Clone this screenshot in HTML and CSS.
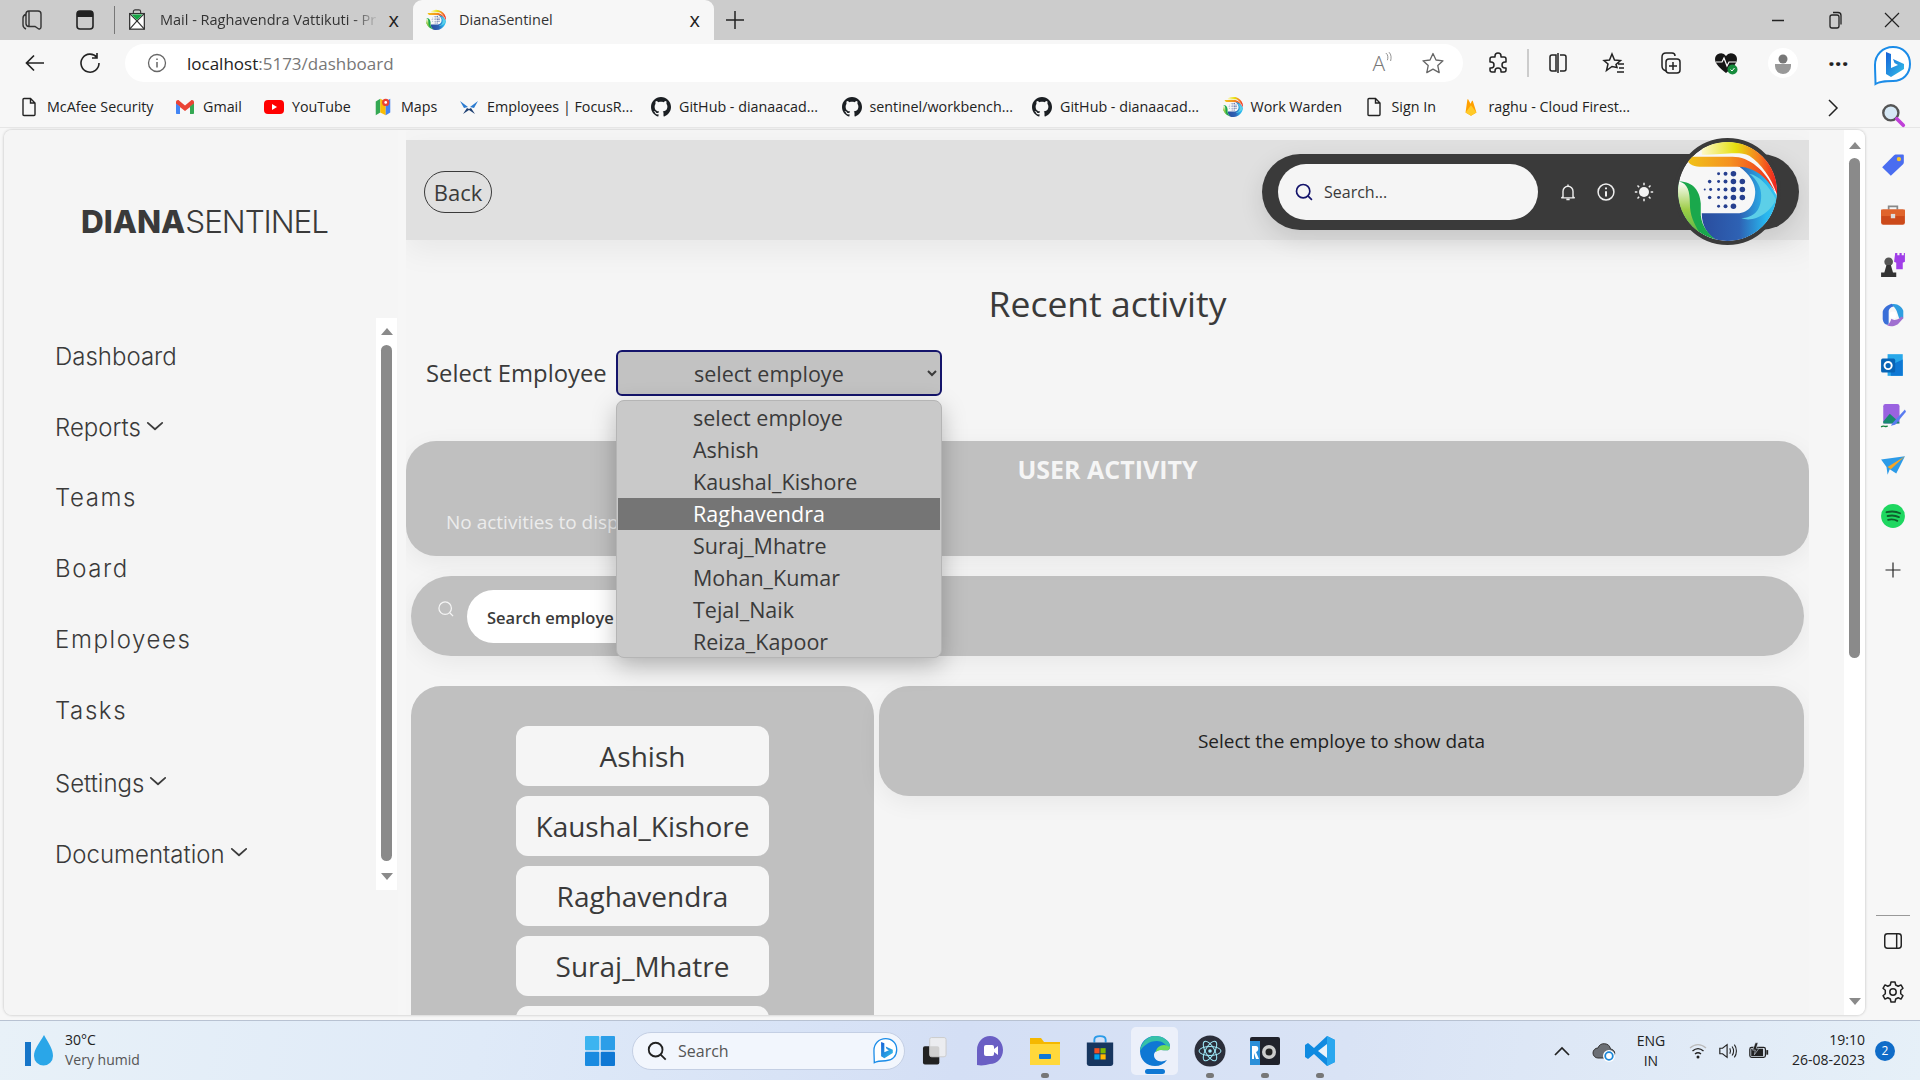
FILE: index.html
```html
<!DOCTYPE html>
<html lang="en">
<head>
    <meta charset="UTF-8">
    <title>DianaSentinel</title>
    <link rel="stylesheet" href="styles.css">
</head>
<body>
    <svg class="defs" width="0" height="0">
        <defs>
            <linearGradient id="bandTop" x1="0" x2="1" y1="0" y2="0">
                <stop offset="0" stop-color="#fdf8c8"/>
                <stop offset=".45" stop-color="#e6e010"/>
                <stop offset=".75" stop-color="#f58020"/>
                <stop offset="1" stop-color="#ee1c1c"/>
            </linearGradient>
            <linearGradient id="bandMid" x1="0" x2="1" y1="0" y2="0">
                <stop offset="0" stop-color="#f0c418"/>
                <stop offset=".5" stop-color="#f59020"/>
                <stop offset="1" stop-color="#ee2a1e"/>
            </linearGradient>
            <linearGradient id="bandBlue" x1="0" x2="1" y1="0" y2="0">
                <stop offset="0" stop-color="#2a4d9e"/>
                <stop offset=".5" stop-color="#2e62b4"/>
                <stop offset=".85" stop-color="#28b6ee"/>
                <stop offset="1" stop-color="#35c4ef"/>
            </linearGradient>
            <linearGradient id="leafPale" x1="0" x2="0" y1="0" y2="1">
                <stop offset="0" stop-color="#ffffff"/>
                <stop offset=".55" stop-color="#9ccc45"/>
                <stop offset="1" stop-color="#5cb848"/>
            </linearGradient>
            <linearGradient id="bingB" x1="0" x2="1" y1="0" y2="1">
                <stop offset="0" stop-color="#1560d8"/>
                <stop offset="1" stop-color="#34c3e8"/>
            </linearGradient>
        </defs>
        <symbol id="logo" viewBox="0 0 100 100">
            <circle cx="50" cy="50" r="50" fill="#f7f7f7"/>
            <path d="M24 6.5A50 50 0 0 1 100 53C94 36 84 22 72 14C62 9 46 13 24 13Z" fill="url(#bandTop)"/>
            <path d="M8 15H55C72 15 88 28 98 50C88 36 76 26 60 25H22C14 25 10 22 8 15Z" fill="url(#bandMid)"/>
            <path d="M24 72H60C72 72 78 62 78 50C78 42 72 32 62 25C80 26 92 38 100 55A50 50 0 0 1 38 98.500C30 94 24 85 24 72Z" fill="url(#bandBlue)"/>
            <path d="M72 32C80 38 84 46 84 54C84 70 76 76 64 77C78 82 94 70 99 58C92 44 82 34 72 32Z" fill="#5ccfe8"/>
            <path d="M1 40C16 40 22 50 23 62V74C24 86 32 94 38 98.500A50 50 0 0 1 1 40Z" fill="#1aa84c"/>
            <path d="M1 40C10 42 12 50 12 62C12 74 16 82 22 92A50 50 0 0 1 1 40Z" fill="url(#leafPale)"/>
            <g fill="#27408f">
                <circle cx="41" cy="32" r="1.500"/><circle cx="48" cy="32" r="2"/><circle cx="56" cy="32" r="2.800"/>
                <circle cx="32" cy="40" r="1.800"/><circle cx="41" cy="40" r="1.500"/><circle cx="48" cy="40" r="2"/><circle cx="56" cy="40" r="2.800"/><circle cx="65" cy="40" r="2.800"/>
                <circle cx="27" cy="48" r="1"/><circle cx="33" cy="48" r="1.500"/><circle cx="41" cy="48" r="1.500"/><circle cx="48" cy="48" r="2"/><circle cx="56" cy="48" r="2.800"/><circle cx="65" cy="48" r="2.800"/>
                <circle cx="32" cy="56" r="1.800"/><circle cx="41" cy="56" r="1.500"/><circle cx="48" cy="56" r="2"/><circle cx="56" cy="56" r="2.800"/><circle cx="65" cy="56" r="2.800"/>
                <circle cx="41" cy="65" r="1.500"/><circle cx="48" cy="65" r="2"/><circle cx="56" cy="65" r="2.800"/>
            </g>
        </symbol>
        <symbol id="github" viewBox="0 0 16 16">
            <path fill="#1b1f23" d="M8 0C3.600 0 0 3.600 0 8c0 3.500 2.300 6.500 5.500 7.600.4.1.5-.2.5-.4v-1.400c-2.200.5-2.700-1-2.700-1-.4-.9-.9-1.200-.9-1.200-.7-.5.1-.5.1-.5.8.1 1.200.8 1.200.8.7 1.200 1.900.9 2.300.7.1-.5.3-.9.5-1.100-1.800-.2-3.600-.9-3.600-4 0-.9.3-1.600.8-2.100-.1-.2-.4-1 .1-2.100 0 0 .7-.2 2.200.8.6-.2 1.300-.3 2-.3s1.400.1 2 .3c1.500-1 2.200-.8 2.200-.8.4 1.100.2 1.900.1 2.100.5.6.8 1.300.8 2.100 0 3.100-1.900 3.700-3.700 3.900.3.3.6.8.6 1.500v2.200c0 .2.1.5.6.4C13.700 14.500 16 11.500 16 8c0-4.400-3.600-8-8-8z"/>
        </symbol>
        <symbol id="doc" viewBox="0 0 16 20">
            <path fill="none" stroke="#222" stroke-width="1.400" d="M3 1.500h6.500L14 6v11.500c0 .6-.4 1-1 1H3c-.6 0-1-.4-1-1v-15c0-.6.4-1 1-1zM9.500 1.500V6H14"/>
        </symbol>
        <symbol id="chev" viewBox="0 0 20 12">
            <path fill="none" stroke="#3c3c3c" stroke-width="2" stroke-linecap="round" stroke-linejoin="round" d="M2 2l8 7 8-7"/>
        </symbol>
        <symbol id="bing" viewBox="0 0 40 44">
            <path fill="#fff" stroke="#1b8ce8" stroke-width="2" d="M21 3C10.500 3 3 11 3 21c0 7 .5 13 .5 19 5-3 10-3 17.500-3 10 0 17-7 17-17S31 3 21 3z"/>
            <path fill="url(#bingB)" d="M14 8l5 2v14l7-3-3.500-2-1.500-4 11 5v5l-13 8-5-3z"/>
        </symbol>
    </svg>

    <div class="tabbar">
        <svg class="ico ws" viewBox="0 0 24 24"><path fill="none" stroke="#333" stroke-width="1.400" d="M9 3h9c1.500 0 3 1 3 3v13c0 2-2 2.500-3 1.500l-3-2H9c-2 0-3-1-3-3V6c0-2 1-3 3-3zM6 6C4 7 3 8 3 10v7c0 2 1 3 3 4M9 3v16"/></svg>
        <svg class="ico vt" viewBox="0 0 24 24"><rect x="4" y="3" width="16" height="18" rx="3" fill="none" stroke="#222" stroke-width="1.600"/><path d="M4 5a2 2 0 0 1 2-2h12a2 2 0 0 1 2 2v4H4z" fill="#222"/></svg>
        <span class="tab-sep"></span>
        <div class="tab mail">
            <svg class="ico-s" viewBox="0 0 20 24"><rect x="2" y="5" width="16" height="17" fill="#fff" stroke="#333" stroke-width="1.400"/><path d="M2 5l8 8 8-8M2 22l8-9 8 9" fill="none" stroke="#333" stroke-width="1.300"/><path d="M4 6h12l-6 6z" fill="#15a544"/><path d="M6 5V3c0-1 1-2 2-2h4c1 0 2 1 2 2v2" fill="none" stroke="#333" stroke-width="1.200"/></svg>
            <span class="tab-title fade">Mail - Raghavendra Vattikuti - Pr</span>
            <span class="tab-x">x</span>
        </div>
        <div class="tab active">
            <svg class="ico-s"><use href="#logo"/></svg>
            <span class="tab-title">DianaSentinel</span>
            <span class="tab-x">x</span>
        </div>
        <svg class="ico plus" viewBox="0 0 24 24"><path d="M12 3v18M3 12h18" stroke="#222" stroke-width="1.500"/></svg>
        <div class="winctl">
            <svg viewBox="0 0 20 20"><path d="M4 10.500h12" stroke="#222" stroke-width="1.500"/></svg>
            <svg viewBox="0 0 20 20"><rect x="5" y="5" width="9" height="13" rx="2" fill="none" stroke="#222" stroke-width="1.300"/><path d="M8 2.500h5c2 0 3 1 3 3v9" fill="none" stroke="#222" stroke-width="1.300"/></svg>
            <svg viewBox="0 0 20 20"><path d="M3 3l14 14M17 3L3 17" stroke="#222" stroke-width="1.200"/></svg>
        </div>
    </div>

    <div class="toolbar">
        <svg class="tool back" viewBox="0 0 24 24"><path d="M21 12H4M11 4.500L3.500 12l7.500 7.500" fill="none" stroke="#222" stroke-width="1.700"/></svg>
        <svg class="tool reload" viewBox="0 0 24 24"><path d="M19 6.500A9 9 0 1 0 21 12M19 2v5h-5" fill="none" stroke="#222" stroke-width="1.600"/></svg>
        <div class="address">
            <svg class="addr-info" viewBox="0 0 20 20"><circle cx="10" cy="10" r="8.500" fill="none" stroke="#666" stroke-width="1.300"/><path d="M10 9v5.500M10 5.500v1.500" stroke="#666" stroke-width="1.500"/></svg>
            <span class="url">localhost<span class="url-dim">:5173/dashboard</span></span>
            <span class="addr-right">
                <span class="read-aloud">A<svg viewBox="0 0 10 14" width="8" height="12"><path d="M1 2c3 2 3 6 2 9M5 1c3 3 3 7 2 11" fill="none" stroke="#777" stroke-width="1"/></svg></span>
                <svg class="star" viewBox="0 0 24 24"><path d="M12 2.500l3 6.500 7 .8-5.200 4.800 1.400 7-6.200-3.500-6.200 3.500 1.400-7L2 9.800 9 9z" fill="none" stroke="#666" stroke-width="1.300" stroke-linejoin="round"/></svg>
            </span>
        </div>
        <div class="tool-group">
            <svg class="tool t-ext" viewBox="0 0 24 24"><path d="M9 5a3 3 0 0 1 6 0v1h3c1 0 2 1 2 2v3h-1a3 3 0 0 0 0 6h1v2c0 1-1 2-2 2h-3v-1a3 3 0 0 0-6 0v1H6c-1 0-2-1-2-2v-2h1a3 3 0 0 0 0-6H4V8c0-1 1-2 2-2h3z" fill="none" stroke="#222" stroke-width="1.500" stroke-linejoin="round"/></svg>
            <span class="tool-sep"></span>
            <svg class="tool t-split" viewBox="0 0 24 24"><path d="M10 4H6C4.500 4 4 5 4 6v12c0 1 .5 2 2 2h4zM14 4h4c1.500 0 2 1 2 2v12c0 1-.5 2-2 2h-4M12 2v20" fill="none" stroke="#222" stroke-width="1.500"/></svg>
            <svg class="tool t-fav" viewBox="0 0 24 24"><path d="M10 3l2.500 6 6 .5-4.500 4 1 3-5-1-5.500 4 1.500-6.500L2 9.500l5.500-.5zM16 13h6M17 17h5M15 21h7" fill="none" stroke="#222" stroke-width="1.500"/></svg>
            <svg class="tool t-coll" viewBox="0 0 24 24"><rect x="8" y="8" width="14" height="14" rx="3" fill="none" stroke="#222" stroke-width="1.500"/><path d="M15 11v8M11 15h8M8 20c-3-1-4-3-4-5V6c0-2 1-4 4-4h6c2 0 3 1 3 3" fill="none" stroke="#222" stroke-width="1.500"/></svg>
            <svg class="tool t-heart" viewBox="0 0 24 24"><path d="M12 22C6 17 1 13 1 8a6 6 0 0 1 11-3 6 6 0 0 1 11 3c0 5-5 9-11 14z" fill="#161616"/><path d="M2 11h6l2-4 3 8 2-4h7" fill="none" stroke="#fff" stroke-width="1.200"/><circle cx="18.500" cy="18.500" r="5" fill="#178c3d"/><path d="M16.500 18.500l1.500 1.500 2.500-3" fill="none" stroke="#fff" stroke-width="1"/></svg>
            <span class="avatar"><svg viewBox="0 0 24 24"><circle cx="12" cy="8" r="4.500" fill="#777"/><path d="M4 13h16v2a8 8 0 0 1-16 0z" fill="#999"/></svg></span>
            <span class="dots">···</span>
        </div>
        <svg class="bing-big"><use href="#bing"/></svg>
    </div>

    <div class="bookmarks">
        <a class="bm bm-mcafee"><svg class="bm-ico"><use href="#doc"/></svg>McAfee Security</a>
        <a class="bm bm-gmail"><svg class="bm-ico" viewBox="0 0 20 16"><path d="M1 3c0-1.500 2-2.500 3-1.500l6 5 6-5c1-1 3 0 3 1.500v2l-9 7-9-7z" fill="#ea4335"/><path d="M1 4.500V14c0 .6.4 1 1 1h3V7.500z" fill="#4285f4"/><path d="M19 4.500V14c0 .6-.4 1-1 1h-3V7.500z" fill="#34a853"/></svg>Gmail</a>
        <a class="bm bm-yt"><svg class="bm-ico" viewBox="0 0 20 16"><rect x="0" y="1" width="20" height="14" rx="4" fill="#f00"/><path d="M8 5l5 3-5 3z" fill="#fff"/></svg>YouTube</a>
        <a class="bm bm-maps"><svg class="bm-ico" viewBox="0 0 20 22"><path d="M2 5l5-3v15l-5 3z" fill="#34a853"/><path d="M7 2l6 3v15l-6-3z" fill="#fbbc04"/><path d="M13 5l5-3v15l-5 3z" fill="#4285f4"/><circle cx="13" cy="6" r="4" fill="#ea4335"/><circle cx="13" cy="6" r="1.500" fill="#fff"/></svg>Maps</a>
        <a class="bm bm-emp"><svg class="bm-ico" viewBox="0 0 20 16"><path d="M1 2l8 6-4 1zM19 2l-8 6 4 1z" fill="#2a7bd0"/><path d="M8 9l-4 6 6-4 6 4-4-6-2 1z" fill="#1d3f72"/></svg>Employees | FocusR...</a>
        <a class="bm bm-gh"><svg class="bm-ico"><use href="#github"/></svg>GitHub - dianaacad...</a>
        <a class="bm bm-gh"><svg class="bm-ico"><use href="#github"/></svg>sentinel/workbench...</a>
        <a class="bm bm-gh"><svg class="bm-ico"><use href="#github"/></svg>GitHub - dianaacad...</a>
        <a class="bm bm-ww"><svg class="bm-ico"><use href="#logo"/></svg>Work Warden</a>
        <a class="bm bm-sign"><svg class="bm-ico"><use href="#doc"/></svg>Sign In</a>
        <a class="bm"><svg class="bm-ico" viewBox="0 0 16 22"><path d="M2 17L4 3c.1-.6.7-.7 1-.2l2.500 4.500 1.500-2.800c.3-.5.800-.5 1 0L14 17l-6 3.500z" fill="#ffa000"/><path d="M2 17l6-8 6 8-6 3.500z" fill="#ffca28"/></svg>raghu - Cloud Firest...</a>
        <svg class="bm-more" viewBox="0 0 12 20"><path d="M2 2l8 8-8 8" fill="none" stroke="#222" stroke-width="1.500"/></svg>
    </div>

    <div class="workspace">
        <div class="content">
            <aside class="sidebar">
                <div class="brand"><b>DIANA</b>SENTINEL</div>
                <div class="side-scroll">
                    <nav class="nav">
                        <a>Dashboard</a>
                        <a>Reports<svg class="nav-chev"><use href="#chev"/></svg></a>
                        <a class="wide">Teams</a>
                        <a class="wide">Board</a>
                        <a class="wide">Employees</a>
                        <a class="wide">Tasks</a>
                        <a>Settings<svg class="nav-chev"><use href="#chev"/></svg></a>
                        <a>Documentation<svg class="nav-chev"><use href="#chev"/></svg></a>
                    </nav>
                    <div class="scrollbar side-bar">
                        <span class="arrow up"></span>
                        <span class="thumb"></span>
                        <span class="arrow down"></span>
                    </div>
                </div>
            </aside>

            <main class="main">
                <header class="topbar">
                    <button class="back-btn">Back</button>
                    <div class="top-tools">
                        <div class="top-search">
                            <svg viewBox="0 0 24 24"><circle cx="11" cy="11" r="8" fill="none" stroke="#14146b" stroke-width="2"/><path d="M17 17l4.500 4.500" stroke="#14146b" stroke-width="2"/></svg>
                            <input type="text" placeholder="Search...">
                        </div>
                        <svg class="top-ico" viewBox="0 0 24 24"><path d="M6 18V11a6 6 0 0 1 12 0v7l2 1H4zM12 3v2M10 21h4" fill="none" stroke="#eee" stroke-width="1.700"/></svg>
                        <svg class="top-ico" viewBox="0 0 24 24"><circle cx="12" cy="12" r="9.500" fill="none" stroke="#eee" stroke-width="1.800"/><path d="M12 11v6.500M12 6.500v2.200" stroke="#eee" stroke-width="2.400"/></svg>
                        <svg class="top-ico" viewBox="0 0 24 24"><circle cx="12" cy="12" r="6" fill="#f3f3f3"/><path d="M12 1v3M12 20v3M1 12h3M20 12h3M4.200 4.200l2 2M17.800 17.800l2 2M4.200 19.800l2-2M17.800 6.200l2-2" stroke="#eee" stroke-width="1.800"/></svg>
                    </div>
                    <svg class="top-logo"><use href="#logo"/></svg>
                </header>

                <h1 class="title">Recent activity</h1>

                <div class="select-row">
                    <label class="select-label">Select Employee</label>
                    <div class="select-wrap">
                        <select class="select"><option>select employe</option></select>
                        <ul class="dropdown">
                            <li>select employe</li>
                            <li>Ashish</li>
                            <li>Kaushal_Kishore</li>
                            <li class="hover">Raghavendra</li>
                            <li>Suraj_Mhatre</li>
                            <li>Mohan_Kumar</li>
                            <li>Tejal_Naik</li>
                            <li>Reiza_Kapoor</li>
                        </ul>
                    </div>
                </div>

                <section class="activity">
                    <h2>USER ACTIVITY</h2>
                    <p>No activities to display</p>
                </section>

                <section class="emp-search">
                    <svg viewBox="0 0 24 24"><circle cx="11" cy="11" r="7.500" fill="none" stroke="#f5f5f5" stroke-width="1.500"/><path d="M16.500 16.500l4 4" stroke="#f5f5f5" stroke-width="1.500"/></svg>
                    <input type="text" placeholder="Search employe">
                </section>

                <div class="lower">
                    <div class="emp-list">
                        <button>Ashish</button>
                        <button>Kaushal_Kishore</button>
                        <button>Raghavendra</button>
                        <button>Suraj_Mhatre</button>
                        <button class="cut"></button>
                    </div>
                    <div class="emp-data">Select the employe to show data</div>
                </div>
            </main>

            <div class="scrollbar page-bar">
                <span class="arrow up"></span>
                <span class="thumb"></span>
                <span class="arrow down"></span>
            </div>
        </div>

        <aside class="edgebar">
            <svg viewBox="0 0 24 24"><circle cx="10" cy="10" r="7" fill="#d6e8f5" stroke="#555" stroke-width="2.200"/><path d="M15.500 15.500l6 6" stroke="#c040d8" stroke-width="3.400" stroke-linecap="round"/></svg>
            <svg viewBox="0 0 24 24"><path d="M2 14L13 3c.5-.5 1-.7 2-.7h6c.6 0 1 .4 1 1v6c0 1-.2 1.500-.7 2L10 22z" fill="#4a6df0"/><circle cx="17.500" cy="6.500" r="2" fill="#f4c430"/></svg>
            <svg viewBox="0 0 24 24"><path d="M8 7V4h8v3" fill="none" stroke="#888" stroke-width="1.600"/><rect x="1" y="7" width="22" height="14" rx="2" fill="#cc4a1a"/><rect x="1" y="7" width="22" height="6" fill="#e0642b"/><rect x="10" y="11" width="4" height="4" fill="#ddd"/></svg>
            <svg viewBox="0 0 24 24"><path d="M14 1h2v2h2V1h2v2h2V1h1v8l-2 1v6h-6v-6l-2-1z" fill="#a03ee8"/><circle cx="8" cy="9" r="4" fill="#555"/><path d="M6 12h4l2 7H4zM1 19h14v4H1z" fill="#333"/></svg>
            <svg viewBox="0 0 24 24"><path d="M11 1.500c-4 1-8 4-8.500 7.500v7c.5 3 2 5 4 5 1 0 1.500-.5 1.500-1.500V9c0-3 3-5 6-5z" fill="#3a6fd8"/><path d="M11 2c5-1 9 2 10.500 6v7c-1.500 1-3 1-4-.5l-2-6c-1-2.500-3-4.500-4.500-6.500z" fill="#2f9ee0"/><path d="M6.500 21.500c3 1.500 7 1 10-1l5-5.500c0-1-1-1.500-2-1.500-3 3-7 4-9 2-1 3-2 5-4 6z" fill="#a06fd0"/><circle cx="12" cy="12" r="3.300" fill="#fff"/></svg>
            <svg viewBox="0 0 24 24"><path d="M7 2h14v20H7z" fill="#28a8ea"/><path d="M10 12l11-5v15H10z" fill="#0f78d4"/><rect x="1" y="6" width="13" height="13" rx="1.500" fill="#0864b5"/><circle cx="7.500" cy="12.500" r="3.300" fill="none" stroke="#fff" stroke-width="1.800"/></svg>
            <svg viewBox="0 0 24 24"><rect x="3" y="1" width="15" height="18" rx="2" fill="#9a62e0"/><path d="M3 17l6-7 9 8v1H3z" fill="#178a6e"/><path d="M23 6L12 18l-2 3 4-1L24 8z" fill="#5a7cf0"/><path d="M1 22c3-2 4 1 6-1" stroke="#15803d" stroke-width="1.300" fill="none"/></svg>
            <svg viewBox="0 0 24 24"><path d="M1 6l22-3-8 16-6-4-2 5-1-7z" fill="#2c9be8"/><path d="M7 13L23 3 10 15z" fill="#f5a623"/></svg>
            <svg viewBox="0 0 24 24"><circle cx="12" cy="12" r="11" fill="#1ed760"/><path d="M6 8.500c4-1 9-.8 12.500 1M7 12c3.500-.8 7.500-.5 10.500 1M7.500 15.500c3-.6 6-.4 8.500 1" fill="none" stroke="#0f5c2c" stroke-width="1.700" stroke-linecap="round"/></svg>
            <svg class="edge-plus" viewBox="0 0 24 24"><path d="M12 3v18M3 12h18" stroke="#222" stroke-width="1.400"/></svg>
            <span class="edge-spacer"></span>
            <span class="edge-line"></span>
            <svg class="edge-panel" viewBox="0 0 24 24"><rect x="3" y="4" width="18" height="16" rx="3" fill="none" stroke="#222" stroke-width="1.600"/><path d="M16 4v16" stroke="#222" stroke-width="1.600"/></svg>
            <svg class="edge-gear" viewBox="0 0 24 24"><circle cx="12" cy="12" r="3.200" fill="none" stroke="#222" stroke-width="1.500"/><path d="M10 2h4l.7 3 2.500 1.200 2.800-1.300 2 3.400-2.300 2v3.400l2.300 2-2 3.400-2.800-1.300-2.500 1.200-.7 3h-4l-.7-3-2.500-1.200-2.800 1.300-2-3.400 2.300-2v-3.400l-2.300-2 2-3.400 2.800 1.300L9.300 5z" fill="none" stroke="#222" stroke-width="1.500" stroke-linejoin="round"/></svg>
        </aside>
    </div>

    <footer class="taskbar">
        <div class="weather">
            <svg viewBox="0 0 32 34"><rect x="1" y="8" width="6" height="24" fill="#1675c8"/><path d="M20 1c5 9 9 14 9 21a9.500 9.500 0 0 1-19 0c0-7 5-12 10-21z" fill="#2aa6e8"/></svg>
            <div class="weather-text"><span>30°C</span><span class="dim">Very humid</span></div>
        </div>
        <div class="task-center">
            <svg class="start" viewBox="0 0 30 30"><rect width="14.300" height="14.300" rx="1" fill="#3cb4f0"/><rect x="15.700" width="14.300" height="14.300" rx="1" fill="#2b9ee8"/><rect y="15.700" width="14.300" height="14.300" rx="1" fill="#1a8be0"/><rect x="15.700" y="15.700" width="14.300" height="14.300" rx="1" fill="#0f78d4"/></svg>
            <div class="task-search">
                <svg class="ts-mag" viewBox="0 0 24 24"><circle cx="10.500" cy="10.500" r="7.500" fill="none" stroke="#222" stroke-width="2"/><path d="M16 16l5.500 5.500" stroke="#222" stroke-width="2"/></svg>
                <span>Search</span>
                <svg class="ts-bing"><use href="#bing"/></svg>
            </div>
            <div class="task-slots">
                <span class="task-slot">
                    <svg class="task-ico view" viewBox="0 0 26 30"><rect x="1" y="10" width="17" height="19" rx="2" fill="#222"/><rect x="8" y="1" width="17" height="20" rx="2" fill="#eee" fill-opacity=".85" stroke="#ccc"/></svg>
                </span>
                <span class="task-slot">
                    <svg class="task-ico" viewBox="0 0 28 32"><path d="M14 1C7 1 1 7 1 15v15c5 1 9 0 13-1 7 0 13-6 13-14S21 1 14 1z" fill="#6a5fc4"/><rect x="8" y="10" width="10" height="11" rx="2" fill="#fff"/><path d="M18 14l4-3v9l-4-3z" fill="#fff"/></svg>
                </span>
                <span class="task-slot running">
                    <svg class="task-ico" viewBox="0 0 32 32"><path d="M1 3h11l3 4h16v22H1z" fill="#f5b800"/><rect x="1" y="9" width="30" height="21" fill="#ffd83b"/><rect x="10" y="19" width="12" height="5" rx="1" fill="#0f78d4"/></svg>
                </span>
                <span class="task-slot">
                    <svg class="task-ico" viewBox="0 0 30 34"><path d="M9 8V5c0-5 12-5 12 0v3" fill="none" stroke="#2a9be8" stroke-width="2"/><path d="M1 8h28v22c0 1.500-1 3-3 3H4c-2 0-3-1.500-3-3z" fill="#17365f"/><rect x="9" y="14" width="5.500" height="5.500" fill="#f25022"/><rect x="15.500" y="14" width="5.500" height="5.500" fill="#7fba00"/><rect x="9" y="20.500" width="5.500" height="5.500" fill="#00a4ef"/><rect x="15.500" y="20.500" width="5.500" height="5.500" fill="#ffb900"/></svg>
                </span>
                <span class="task-slot edge-tile">
                    <svg class="task-ico" viewBox="0 0 32 32"><path d="M16 1C7 1 1 8 1 16c0 9 7 15 15 15 5 0 9-2 12-6-6 3-13 1-13-5 0-3 3-5 7-5 5 0 9 2 9-4C31 6 24 1 16 1z" fill="#0f78d4"/><path d="M1 16C2 8 8 1 16 1c8 0 15 5 15 10 0 2-1 3-3 3 0-5-5-8-10-8-8 0-14 5-17 10z" fill="#35c1a8"/><path d="M31 11c0 6-4 4-9 4-2 0-4 1-5 2 0-4 4-7 8-7 2 0 4 1 5 2z" fill="#6fdc5a"/></svg>
                </span>
                <span class="task-slot running">
                    <svg class="task-ico" viewBox="0 0 32 32"><circle cx="16" cy="16" r="15.500" fill="#2b2e3a"/><g fill="none" stroke="#9feaf9" stroke-width="1"><ellipse cx="16" cy="16" rx="11" ry="4.500"/><ellipse cx="16" cy="16" rx="11" ry="4.500" transform="rotate(60 16 16)"/><ellipse cx="16" cy="16" rx="11" ry="4.500" transform="rotate(120 16 16)"/></g><circle cx="16" cy="16" r="1.800" fill="#9feaf9"/></svg>
                </span>
                <span class="task-slot running">
                    <svg class="task-ico" viewBox="0 0 32 32"><rect x="1" y="2" width="30" height="28" rx="2" fill="#20222b"/><rect x="1" y="6" width="10" height="24" fill="#2b8fd8"/><path d="M3 11h4c3 0 3 5 0 6l3 7H7l-2-6v6H3z" fill="#fff"/><circle cx="20" cy="17" r="7" fill="#ccc"/><circle cx="20" cy="17" r="3.500" fill="#222"/></svg>
                </span>
                <span class="task-slot running">
                    <svg class="task-ico" viewBox="0 0 32 32"><path d="M23 1l8 4v22l-8 4-13-12-6 5-3-2V10l3-2 6 5z" fill="#0f8ae0"/><path d="M23 1l8 4v22l-8 4z" fill="#2aa7ef"/><path d="M23 9v14l-9-7z" fill="#e8f3fb"/></svg>
                </span>
            </div>
        </div>
        <div class="tray">
            <svg class="tray-ico t-up" viewBox="0 0 20 20"><path d="M3 14l7-7 7 7" fill="none" stroke="#222" stroke-width="1.700"/></svg>
            <svg class="tray-ico t-cloud" viewBox="0 0 24 24"><path d="M6 19a5 5 0 0 1 0-10 6.500 6.500 0 0 1 12.500 1A4.500 4.500 0 0 1 18 19z" fill="#6b6f75" stroke="#333"/><circle cx="17" cy="17" r="6" fill="#fff"/><circle cx="17" cy="17" r="3.800" fill="none" stroke="#1a86d8" stroke-width="1.800"/></svg>
            <div class="lang"><span>ENG</span><span>IN</span></div>
            <svg class="tray-ico t-wifi" viewBox="0 0 20 20"><path d="M2 7c5-4.500 11-4.500 16 0" fill="none" stroke="#bbb" stroke-width="1.400"/><path d="M4.500 10c3.500-3 7.500-3 11 0M7 13c2-1.600 4-1.600 6 0" fill="none" stroke="#222" stroke-width="1.400"/><circle cx="10" cy="16" r="1.500" fill="#222"/></svg>
            <svg class="tray-ico t-vol" viewBox="0 0 22 20"><path d="M2 7h3l5-4v14l-5-4H2z" fill="none" stroke="#222" stroke-width="1.300"/><path d="M13 7c1 2 1 4 0 6M15.500 5c2 3 2 7 0 10M18 3c3 4 3 10 0 14" fill="none" stroke="#222" stroke-width="1.200"/></svg>
            <svg class="tray-ico t-bat" viewBox="0 0 24 20"><rect x="2" y="6" width="17" height="11" rx="2" fill="none" stroke="#222" stroke-width="1.400"/><rect x="3.500" y="7.500" width="13" height="8" fill="#222"/><path d="M20 9h2v5h-2z" fill="#222"/><path d="M8 1L5 9h3l-1 5 5-7H9l2-6z" fill="#222" stroke="#e4ecf9" stroke-width=".6"/></svg>
            <div class="clock"><span>19:10</span><span>26-08-2023</span></div>
            <span class="badge">2</span>
        </div>
    </footer>
</body>
</html>
```

FILE: styles.css
```css
* {
    box-sizing: border-box;
}

html, body {
    margin: 0;
    padding: 0;
    width: 1920px;
    height: 1080px;
    overflow: hidden;
}

body {
    display: flex;
    flex-direction: column;
    background: #f7f7f7;
    font-family: "Open Sans", "Liberation Sans", sans-serif;
    color: #3a3a3a;
}

.defs {
    position: absolute;
}

svg {
    display: block;
    flex: none;
}

/* Browser tabs */
.tabbar {
    display: flex;
    align-items: center;
    height: 40px;
    background: #cccccc;
    font-size: 14.5px;
    color: #333;
}

.ico {
    width: 24px;
    height: 24px;
}

.ws {
    margin-left: 20px;
}

.vt {
    margin-left: 29px;
}

.tab-sep {
    width: 1px;
    height: 28px;
    margin-left: 17px;
    background: #777;
}

.tab {
    display: flex;
    align-items: center;
    height: 40px;
    padding-left: 12px;
    padding-right: 14px;
}

.tab.mail {
    width: 298px;
}

.tab.active {
    width: 301px;
    padding-left: 13px;
    background: #f7f7f7;
    border-radius: 9px 9px 0 0;
}

.ico-s {
    width: 20px;
    height: 22px;
}

.tab-title {
    flex: 1;
    margin: 0 0 2px 13px;
    white-space: nowrap;
    overflow: hidden;
}

.tab-title.fade {
    margin-right: 10px;
    -webkit-mask-image: linear-gradient(to right, #000 88%, transparent);
    mask-image: linear-gradient(to right, #000 88%, transparent);
}

.tab-x {
    font-size: 20px;
    line-height: 20px;
    color: #222;
}

.plus {
    margin-left: 9px;
}

.winctl {
    display: flex;
    gap: 37px;
    margin-left: auto;
    padding-right: 18px;
}

.winctl svg {
    width: 20px;
    height: 20px;
}

/* Address bar */
.toolbar {
    display: flex;
    align-items: center;
    height: 46px;
    position: relative;
}

.tool {
    width: 24px;
    height: 24px;
}

.back {
    margin-left: 23px;
}

.reload {
    margin-left: 31px;
}

.address {
    display: flex;
    align-items: center;
    width: 1338px;
    height: 38px;
    margin-left: 23px;
    padding-left: 22px;
    background: #fff;
    border-radius: 19px;
}

.addr-info {
    width: 20px;
    height: 20px;
}

.url {
    margin-left: 20px;
    font-size: 17px;
    color: #222;
}

.url-dim {
    color: #777;
}

.addr-right {
    display: flex;
    align-items: center;
    gap: 28px;
    margin-left: auto;
    padding-right: 18px;
}

.read-aloud {
    display: flex;
    align-items: flex-start;
    font-size: 21px;
    line-height: 24px;
    font-weight: 300;
    color: #777;
}

.star {
    width: 24px;
    height: 24px;
}

.tool-group {
    display: flex;
    align-items: center;
    margin-left: 23px;
}

.tool-sep {
    width: 2px;
    height: 28px;
    margin: 0 17px;
    background: #ccc;
}

.t-split, .t-fav, .t-coll {
    margin-right: 32px;
}

.t-heart {
    margin-right: 30px;
}

.avatar {
    display: flex;
    justify-content: center;
    align-items: center;
    width: 30px;
    height: 30px;
    margin-right: 30px;
    border-radius: 50%;
    background: #fff;
}

.avatar svg {
    width: 24px;
    height: 24px;
}

.dots {
    font-size: 24px;
    font-weight: 700;
    line-height: 20px;
    color: #222;
}

.bing-big {
    position: absolute;
    left: 1872px;
    top: 4px;
    width: 40px;
    height: 44px;
}

/* Favourites */
.bookmarks {
    display: flex;
    align-items: center;
    height: 42px;
    padding-left: 19px;
    border-bottom: 1px solid #e6e6e6;
    font-size: 14.3px;
    color: #222;
    position: relative;
}

.bm {
    display: flex;
    align-items: center;
    gap: 8px;
    white-space: nowrap;
}

.bm-ico {
    width: 20px;
    height: 20px;
}

.bm-mcafee { width: 156px; }
.bm-gmail { width: 89px; }
.bm-yt { width: 109px; }
.bm-maps { width: 86px; }
.bm-emp { width: 192px; }
.bm-gh { width: 190.5px; }
.bm-ww { width: 141px; }
.bm-sign { width: 97px; }

.bm-more {
    position: absolute;
    left: 1827px;
    top: 12px;
    width: 12px;
    height: 20px;
}

/* Page area */
.workspace {
    flex: 1;
    display: flex;
    height: 892px;
    min-height: 0;
}

.content {
    display: flex;
    width: 1861px;
    height: 885px;
    margin: 2px 0 0 4px;
    background: #f6f6f6;
    border-radius: 8px;
    overflow: hidden;
    box-shadow: 0 0 3px rgba(0, 0, 0, 0.25);
}

.sidebar {
    width: 394px;
    background: #f5f5f5;
    flex: none;
    display: flex;
    flex-direction: column;
}

.brand {
    padding: 70px 0 0 77px;
    font-family: Inter, sans-serif;
    font-size: 31.5px;
    line-height: 44px;
    font-weight: 300;
    letter-spacing: -1.1px;
    color: #3a3a3a;
    height: 188px;
}

.brand b {
    font-weight: 800;
    letter-spacing: 0;
}

.side-scroll {
    display: flex;
    justify-content: space-between;
    height: 572px;
}

.nav {
    display: flex;
    flex-direction: column;
    padding-left: 51px;
    padding-top: 3px;
}

.nav a {
    display: flex;
    align-items: center;
    gap: 5px;
    height: 71.3px;
    font-family: Inter, sans-serif;
    font-size: 24px;
    font-weight: 300;
    color: #3a3a3a;
}

.nav a.wide {
    padding-bottom: 3px;
    letter-spacing: 1.6px;
}

.nav-chev {
    width: 18px;
    height: 11px;
    margin-bottom: 3px;
}

.scrollbar {
    display: flex;
    flex-direction: column;
    align-items: center;
    width: 21px;
    background: #fff;
}

.side-bar {
    margin-right: 1px;
    padding: 10px 0;
}

.thumb {
    flex: 1;
    width: 11px;
    margin: 10px 0 12px;
    background: #8a8a8a;
    border-radius: 6px;
}

.arrow {
    width: 0;
    height: 0;
    border-left: 6px solid transparent;
    border-right: 6px solid transparent;
}

.arrow.up {
    border-bottom: 7px solid #8a8a8a;
}

.arrow.down {
    border-top: 7px solid #8a8a8a;
}

.main {
    width: 1403px;
    margin-left: 8px;
    padding-top: 10px;
    background: #f5f5f5;
    flex: none;
    overflow: hidden;
    position: relative;
}

.topbar {
    position: relative;
    display: flex;
    align-items: center;
    justify-content: space-between;
    height: 100px;
    padding: 4px 10px 0 18px;
    background: #e0e0e0;
    box-shadow: 0 10px 30px rgba(0, 0, 0, 0.06);
}

.back-btn {
    width: 68px;
    height: 42px;
    padding: 0;
    border: 1px solid #3a3a3a;
    border-radius: 21px;
    background: transparent;
    font-family: inherit;
    font-size: 22px;
    color: #3a3a3a;
}

.top-tools {
    display: flex;
    align-items: center;
    gap: 18px;
    width: 537px;
    height: 76px;
    padding-left: 16px;
    background: #3a3a3a;
    border-radius: 38px;
    box-shadow: 0 8px 24px rgba(0, 0, 0, 0.12);
}

.top-search {
    display: flex;
    align-items: center;
    gap: 8px;
    width: 260px;
    height: 56px;
    padding-left: 16px;
    margin-right: 2px;
    background: #f5f5f5;
    border-radius: 28px;
}

.top-search svg {
    width: 20px;
    height: 20px;
}

.top-search input {
    width: 190px;
    border: none;
    outline: none;
    background: transparent;
    font-family: inherit;
    font-size: 16px;
    font-weight: 500;
}

.top-search input::placeholder {
    color: #3a3a3a;
    opacity: 1;
}

.top-ico {
    width: 20px;
    height: 20px;
}

.top-logo {
    position: absolute;
    left: 1268px;
    top: -2px;
    width: 107px;
    height: 107px;
    border: 4px solid #3a3a3a;
    border-radius: 50%;
    background: #3a3a3a;
}

.title {
    margin: 38px 0 0;
    text-align: center;
    font-size: 35.5px;
    line-height: 50px;
    font-weight: 400;
    color: #3a3a3a;
}

.select-row {
    display: flex;
    align-items: center;
    gap: 10px;
    margin-top: 22px;
    padding-left: 20px;
    height: 46px;
}

.select-label {
    width: 180px;
    font-size: 23.8px;
    line-height: 44px;
    white-space: nowrap;
}

.select-wrap {
    position: relative;
    width: 326px;
    height: 46px;
}

.select {
    width: 100%;
    height: 100%;
    padding-left: 72px;
    border: 2px solid #14146b;
    border-radius: 6px;
    outline: none;
    background-color: #c2c2c2;
    font-family: inherit;
    font-size: 21.5px;
    color: #3a3a3a;
}

.dropdown {
    position: absolute;
    top: 50px;
    left: 0;
    z-index: 5;
    width: 326px;
    height: 258px;
    margin: 0;
    padding: 1px;
    list-style: none;
    background: #c9c9c9;
    border: 1px solid #b5b5b5;
    border-radius: 8px;
    box-shadow: 0 8px 24px rgba(0, 0, 0, 0.25);
    overflow: hidden;
    font-size: 21.5px;
}

.dropdown li {
    height: 32px;
    padding-left: 75px;
    line-height: 32px;
    color: #3a3a3a;
}

.dropdown li.hover {
    background: #757575;
    color: #fff;
}

.activity {
    height: 115px;
    margin-top: 45px;
    padding-top: 9px;
    background: #c0c0c0;
    border-radius: 30px;
    box-shadow: 0 6px 24px rgba(0, 0, 0, 0.06);
    position: relative;
}

.activity h2 {
    margin: 0;
    text-align: center;
    font-size: 25px;
    line-height: 38px;
    font-weight: 700;
    color: #f5f5f5;
}

.activity p {
    margin: 19px 0 0 40px;
    font-size: 19px;
    line-height: 30px;
    color: #ececec;
}

.emp-search {
    display: flex;
    align-items: center;
    height: 80px;
    margin: 20px 5px 0;
    padding-left: 25px;
    gap: 11px;
    background: #c0c0c0;
    border-radius: 40px;
    box-shadow: 0 6px 24px rgba(0, 0, 0, 0.06);
}

.emp-search svg {
    width: 20px;
    height: 20px;
    margin-bottom: 14px;
}

.emp-search input {
    width: 440px;
    height: 53px;
    padding: 2px 0 0 20px;
    border: none;
    outline: none;
    border-radius: 27px;
    background: #fff;
    font-family: inherit;
    font-size: 16.5px;
    font-weight: 600;
}

.emp-search input::placeholder {
    color: #3a3a3a;
    opacity: 1;
}

.lower {
    display: grid;
    grid-template-columns: 463px 925px;
    gap: 5px;
    margin: 30px 5px 0;
    align-items: start;
}

.emp-list {
    display: flex;
    flex-direction: column;
    align-items: center;
    gap: 10px;
    height: 329px;
    padding-top: 40px;
    overflow: hidden;
    background: #c0c0c0;
    border-radius: 30px 30px 0 0;
}

.emp-list button {
    flex: none;
    width: 253px;
    height: 60px;
    border: none;
    border-radius: 12px;
    background: #f5f5f5;
    font-family: inherit;
    font-size: 28px;
    color: #3a3a3a;
}

.emp-data {
    display: flex;
    align-items: center;
    justify-content: center;
    height: 110px;
    background: #c0c0c0;
    border-radius: 30px;
    box-shadow: 0 6px 24px rgba(0, 0, 0, 0.06);
    font-size: 19px;
    color: #222;
}

.page-bar {
    width: 21px;
    height: 100%;
    margin-left: 35px;
    padding: 12px 0 10px;
}

.page-bar .thumb {
    flex: none;
    height: 500px;
    margin: 9px 0 auto;
}

/* Edge side panel */
.edgebar {
    display: flex;
    flex-direction: column;
    align-items: center;
    width: 55px;
    margin-top: -26px;
    gap: 24.1px;
    position: relative;
    padding-bottom: 16px;
    height: 918px;
    flex: none;
}

.edgebar > svg {
    width: 26px;
    height: 26px;
}

.edge-spacer {
    flex: 1;
}

.edge-line {
    width: 34px;
    height: 1px;
    margin-bottom: -10px;
    background: #999;
}

.edgebar .edge-panel {
    width: 24px;
    height: 22px;
    margin-bottom: 4px;
}

.edgebar .edge-gear {
    width: 24px;
    height: 24px;
}

.edgebar .edge-plus {
    width: 20px;
    height: 20px;
    margin-top: 7px;
}

/* Windows taskbar */
.taskbar {
    display: flex;
    align-items: center;
    height: 60px;
    flex: none;
    position: relative;
    border-top: 1px solid #b8c2d2;
    background: linear-gradient(100deg, #e8f1f8 0%, #dfeaf8 25%, #d4dff5 50%, #d9e3f5 70%, #e6f0f8 100%);
    font-size: 14px;
    color: #222;
}

.weather {
    display: flex;
    align-items: center;
    gap: 9px;
    width: 585px;
    padding-left: 24px;
}

.weather svg {
    width: 32px;
    height: 34px;
}

.weather-text {
    display: flex;
    flex-direction: column;
    margin-bottom: 2px;
    line-height: 20px;
    font-size: 14px;
}

.weather-text .dim {
    color: #555;
}

.task-center {
    display: flex;
    align-items: center;
}

.start {
    width: 30px;
    height: 30px;
}

.task-search {
    display: flex;
    align-items: center;
    width: 273px;
    height: 38px;
    margin-left: 17px;
    padding-left: 13px;
    background: #f2f6fd;
    border: 1px solid #c4cfe4;
    border-radius: 19px;
    font-size: 16px;
    color: #555;
}

.ts-mag {
    width: 22px;
    height: 22px;
    margin-right: 10px;
}

.ts-bing {
    width: 26px;
    height: 30px;
    margin-left: auto;
    margin-right: 6px;
}

.task-slots {
    display: flex;
    gap: 8px;
    margin-left: 6px;
}

.task-ico {
    width: 32px;
    height: 32px;
}

.task-ico.view {
    width: 25px;
    height: 30px;
}

.task-slot {
    display: flex;
    justify-content: center;
    align-items: center;
    position: relative;
    width: 47px;
    height: 48px;
}

.task-slot.running::after,
.task-slot.edge-tile::after {
    content: "";
    position: absolute;
    left: 50%;
    bottom: -3px;
    width: 8px;
    height: 5px;
    margin-left: -4px;
    border-radius: 3px;
    background: #777;
}

.task-slot.edge-tile {
    background: #ecf0fa;
    border-radius: 5px;
}

.task-slot.edge-tile::after {
    width: 20px;
    margin-left: -10px;
    bottom: 1px;
    background: #0f78d4;
}

.tray {
    display: flex;
    align-items: center;
    position: absolute;
    right: 0;
    top: 0;
    height: 59px;
    padding-right: 25px;
}

.tray-ico {
    width: 20px;
    height: 20px;
}

.t-up { margin-right: 20px; }
.t-cloud { width: 24px; height: 24px; margin-right: 19px; }
.t-wifi { margin-left: 21px; margin-right: 10px; }
.t-vol { margin-right: 10px; }
.t-bat { width: 22px; }

.lang {
    display: flex;
    flex-direction: column;
    align-items: center;
    width: 32px;
    line-height: 20px;
    font-size: 14px;
}

.clock {
    display: flex;
    flex-direction: column;
    align-items: flex-end;
    margin-left: 22px;
    margin-bottom: 2px;
    line-height: 20px;
    font-size: 14px;
}

.badge {
    display: flex;
    justify-content: center;
    align-items: center;
    width: 20px;
    height: 20px;
    margin-left: 10px;
    border-radius: 50%;
    background: #0f6cc8;
    color: #fff;
    font-size: 12px;
}
```
